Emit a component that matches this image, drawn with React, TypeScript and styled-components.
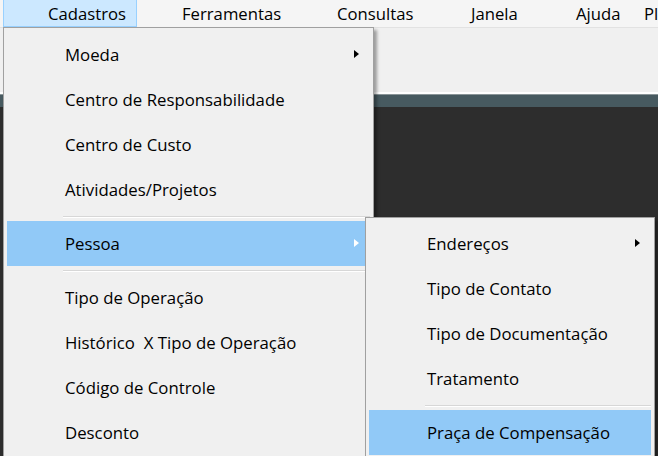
import React from 'react';
import styled, { createGlobalStyle } from 'styled-components';

// Menu data
const topMenus = [
  { label: 'Cadastros', width: 134, open: true },
  { label: 'Ferramentas', width: 155 },
  { label: 'Consultas', width: 134 },
  { label: 'Janela', width: 105 },
  { label: 'Ajuda', width: 68 },
  { label: 'Plugins', width: 80 }
];

type Entry = { label?: string; sub?: boolean; active?: boolean; separator?: boolean };

const cadastros: Entry[] = [
  { label: 'Moeda', sub: true },
  { label: 'Centro de Responsabilidade' },
  { label: 'Centro de Custo' },
  { label: 'Atividades/Projetos' },
  { separator: true },
  { label: 'Pessoa', sub: true, active: true },
  { separator: true },
  { label: 'Tipo de Operação' },
  { label: 'Histórico  X Tipo de Operação' },
  { label: 'Código de Controle' },
  { label: 'Desconto' }
];

const pessoa: Entry[] = [
  { label: 'Endereços', sub: true },
  { label: 'Tipo de Contato' },
  { label: 'Tipo de Documentação' },
  { label: 'Tratamento' },
  { separator: true },
  { label: 'Praça de Compensação', active: true }
];

const GlobalStyle = createGlobalStyle`
  body {
    margin: 0;
    overflow: hidden;
    font-family: 'Open Sans', 'Noto Sans', sans-serif;
  }
`;

const Window = styled.div`
  position: relative;
  width: 658px;
  height: 456px;
  overflow: hidden;
  background: #2d2d2d;
  display: flex;
  flex-direction: column;
`;

const MenuBar = styled.div`
  display: flex;
  height: 27px;
  padding-left: 3px;
  background: #f5f5f5;
  border-bottom: 1px solid #e2e2e2;
  overflow: hidden;
`;

const BarItem = styled.div<{ $width: number; $open?: boolean }>`
  flex: none;
  width: ${({ $width }) => $width}px;
  box-sizing: border-box;
  padding-left: 44px;
  font-size: 16.7px;
  line-height: 27px;
  color: #000;
  white-space: nowrap;
  background: ${({ $open }) => ($open ? '#cce8ff' : 'transparent')};
  border: 1px solid ${({ $open }) => ($open ? '#99d1ff' : 'transparent')};
  border-top: none;
`;

const ToolArea = styled.div`
  height: 64px;
  background: #f0f0f0;
  border-bottom: 2px solid #ffffff;
`;

const TitleStrip = styled.div`
  height: 12px;
  background: #475a60;
  border-top: 1px solid #8a9598;
`;

const Workspace = styled.div`
  flex: 1;
  background: #2d2d2d;
`;

const Menu = styled.div<{ $left: number; $top: number; $width: number; $pad: number }>`
  position: absolute;
  left: ${({ $left }) => $left}px;
  top: ${({ $top }) => $top}px;
  width: ${({ $width }) => $width}px;
  box-sizing: border-box;
  padding: ${({ $pad }) => $pad}px 3px 3px 3px;
  background: #f0f0f0;
  border: 1px solid #a0a0a0;
  box-shadow: 3px 3px 3px rgba(0, 0, 0, 0.35);
`;

const Item = styled.div<{ $active?: boolean }>`
  position: relative;
  height: 45px;
  display: flex;
  align-items: center;
  padding-left: 58px;
  font-size: 16.8px;
  color: #000;
  white-space: pre;
  background: ${({ $active }) => ($active ? '#91c9f7' : 'transparent')};
`;

const Arrow = styled.span<{ $light?: boolean }>`
  position: absolute;
  right: 11px;
  top: 18px;
  width: 0;
  height: 0;
  border-top: 4px solid transparent;
  border-bottom: 4px solid transparent;
  border-left: 5px solid ${({ $light }) => ($light ? '#ffffff' : '#000000')};
`;

const Separator = styled.div`
  height: 9px;
  display: flex;
  align-items: center;
  padding-left: 56px;

  &::after {
    content: '';
    flex: 1;
    height: 1px;
    background: #d7d7d7;
    border-bottom: 1px solid #ffffff;
  }
`;

const MenuList = ({ entries }: { entries: Entry[] }) => (
  <>
    {entries.map((entry, index) =>
      entry.separator ? (
        <Separator key={index} />
      ) : (
        <Item key={index} $active={entry.active}>
          {entry.label}
          {entry.sub && <Arrow $light={entry.active} />}
        </Item>
      )
    )}
  </>
);

const App = () => {
  return (
    <>
      <GlobalStyle />
      <Window>
        <MenuBar>
          {topMenus.map((menu) => (
            <BarItem key={menu.label} $width={menu.width} $open={menu.open}>
              {menu.label}
            </BarItem>
          ))}
        </MenuBar>
        <ToolArea />
        <TitleStrip />
        <Workspace />

        <Menu $left={3} $top={27} $width={371} $pad={4}>
          <MenuList entries={cadastros} />
        </Menu>
        <Menu $left={365} $top={217} $width={290} $pad={3}>
          <MenuList entries={pessoa} />
        </Menu>
      </Window>
    </>
  );
};

export default App;
